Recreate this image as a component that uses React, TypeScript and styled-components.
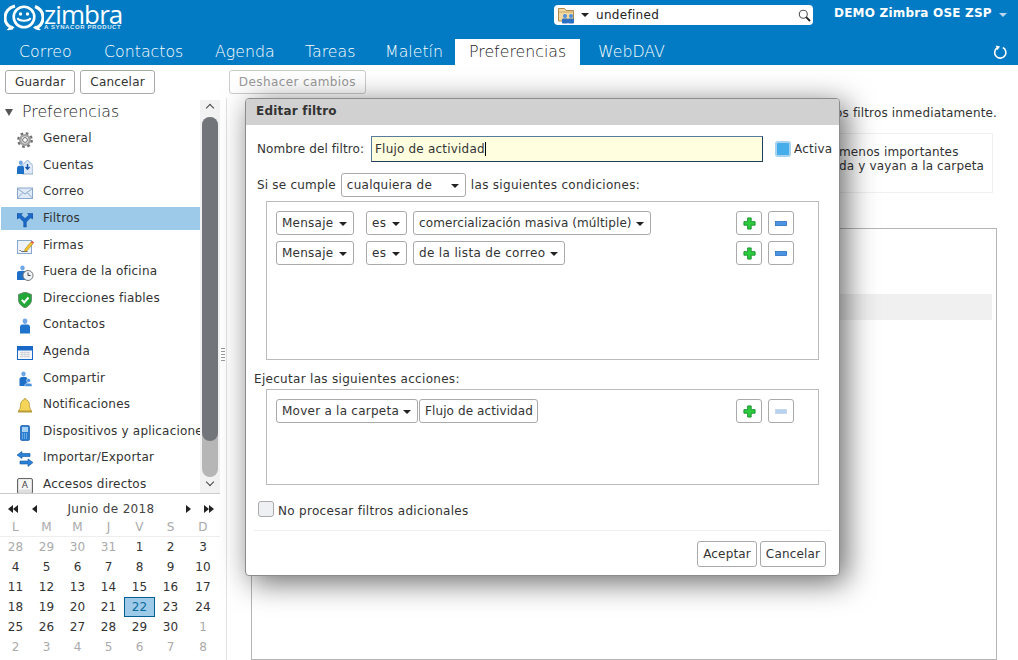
import React from "react";
import styled, { createGlobalStyle } from "styled-components";

const GlobalStyle = createGlobalStyle`
  html, body {
    margin: 0;
    padding: 0;
    background: #fff;
    font-family: "DejaVu Sans", sans-serif;
    font-size: 12px;
    color: #333;
  }
  * { box-sizing: border-box; }
`;

const Gear = () => (
  <svg width="16" height="16" viewBox="0 0 16 16">
    <circle cx="8" cy="8" r="6.500" fill="none" stroke="#6f6f6f" strokeWidth="2.800" strokeDasharray="2.550 2.550" />
    <circle cx="8" cy="8" r="4.700" fill="none" stroke="#a2a2a2" strokeWidth="2.600" />
    <circle cx="8" cy="8" r="2.400" fill="#fff" stroke="#555" strokeWidth=".9" />
  </svg>
);

const Accounts = () => (
  <svg width="16" height="16" viewBox="0 0 16 16">
    <path d="M5 6.500 10.500 1 16 6.500V15H5z" fill="#dce8f5" stroke="#7d9dc4" strokeWidth=".8" />
    <path d="M10.500 5v5M8.500 8l2 2.300 2-2.300" fill="none" stroke="#1656a8" strokeWidth="1.400" />
    <path d="M3.800 1.500c1.300 0 2 1 2 2.200S5.100 6 3.800 6 1.800 4.900 1.800 3.700 2.500 1.500 3.800 1.500z" fill="#6fa6e4" />
    <path d="M0 15v-6c0-1.300 1-2.300 2-2.300h3.500c1 0 1.500 1 1.500 2.300v6z" fill="#1e6fc8" />
  </svg>
);

const Envelope = () => (
  <svg width="16" height="16" viewBox="0 0 16 16">
    <rect x=".5" y="3" width="15" height="10.500" fill="#dfeaf6" stroke="#8aa7cc" />
    <path d="M.5 3.500 8 9l7.500-5.500M.5 13l5.200-5.200M15.500 13l-5.200-5.200" fill="none" stroke="#8aa7cc" />
  </svg>
);

const FilterIcon = () => (
  <svg width="16" height="16" viewBox="0 0 16 16">
    <path d="M6.700 15V10L2.500 5.800 0 7V1.500h5.500L4 3 8 6.500 12 3l-1.500-1.500H16V7l-2.500-1.200L9.300 10v5z" fill="#1a68c8" stroke="#0f4a98" strokeWidth=".5" />
  </svg>
);

const Signature = () => (
  <svg width="17" height="16" viewBox="0 0 17 16">
    <rect x=".5" y="2.500" width="14" height="13" fill="#eef3fa" stroke="#8aa7cc" />
    <path d="M2.500 12.500h1l1 1h6" fill="none" stroke="#444" strokeWidth=".8" />
    <path d="M8 11 14 4l2 1.800-6 7-2.500.8z" fill="#f2c230" stroke="#9a7a10" strokeWidth=".5" />
    <path d="M14 4l1-1.200 2 1.800-1 1.200z" fill="#e24a4a" />
  </svg>
);

const OutOfOffice = () => (
  <svg width="17" height="16" viewBox="0 0 17 16">
    <path d="M5.500 0.500c1.400 0 2.200 1 2.200 2.300S6.900 5.500 5.500 5.500 3.300 4.100 3.300 2.800 4.100 0.500 5.500 0.500z" fill="#6fa6e4" />
    <path d="M0 15V8c0-1.300 1-2 2-2h7c1 0 2 .7 2 2v7z" fill="#1e6fc8" />
    <circle cx="11" cy="10.500" r="5" fill="#eef2f6" stroke="#777" />
    <path d="M11 7.500v3h2.500" fill="none" stroke="#444" />
  </svg>
);

const Shield = () => (
  <svg width="16" height="16" viewBox="0 0 16 16">
    <path d="M8 0 14.500 2.500V8c0 3.500-3 6.200-6.500 8C4.500 14.200 1.500 11.500 1.500 8V2.500z" fill="#22a838" stroke="#5f7f6a" strokeWidth=".8" />
    <path d="M4.800 7.800 7.200 10.500 11.500 5.500" fill="none" stroke="#fff" strokeWidth="2" />
  </svg>
);

const Contact = () => (
  <svg width="16" height="16" viewBox="0 0 16 16">
    <path d="M8 .5c1.500 0 2.400 1.100 2.400 2.500S9.500 6 8 6 5.600 4.400 5.600 3 6.500.5 8 .5z" fill="#6fa6e4" />
    <path d="M3 15.500V9c0-1.500 1-2.500 2.300-2.500h5.400C12 6.500 13 7.500 13 9v6.500z" fill="#1e74cc" />
  </svg>
);

const CalendarIcon = () => (
  <svg width="16" height="16" viewBox="0 0 16 16">
    <rect x=".5" y="1.500" width="15" height="13" fill="#f4f6f8" stroke="#1a68c8" />
    <rect x="1" y="2" width="14" height="3.500" fill="#1a68c8" />
    <path d="M3 7.500h10M3 9.500h10M3 11.500h10M5 6.500v6M8 6.500v6M11 6.500v6" stroke="#c8ccd2" strokeWidth=".7" />
  </svg>
);

const Share = () => (
  <svg width="16" height="16" viewBox="0 0 16 16">
    <path d="M6.500 .5c1.300 0 2.200 1 2.200 2.300S7.800 5.500 6.500 5.500 4.300 4.100 4.300 2.800 5.200.5 6.500.5z" fill="#6fa6e4" />
    <path d="M2.500 15V8.500C2.500 7 3.500 6 4.800 6h3.500C9.600 6 10.500 7 10.500 8.500V15z" fill="#1e6fc8" />
    <circle cx="11.500" cy="9.500" r="2" fill="#4a92de" stroke="#fff" strokeWidth=".5" />
    <path d="M8 15.500V14c0-1 1-1.800 2-1.800h3c1 0 2 .8 2 1.800v1.500z" fill="#4a92de" stroke="#fff" strokeWidth=".5" />
  </svg>
);

const Bell = () => (
  <svg width="16" height="16" viewBox="0 0 16 16">
    <path d="M8 .5c.8 0 1.200.6 1.200 1.300C11.500 2.500 12.500 4.500 12.500 7.500c0 2.500 1 4 2 5.500h-13c1-1.500 2-3 2-5.500 0-3 1-5 3.300-5.700C6.800 1.100 7.200.5 8 .5z" fill="#f5d45a" stroke="#a8892a" strokeWidth=".7" />
    <rect x="1" y="13" width="14" height="1.500" fill="#b89a38" />
  </svg>
);

const Phone = () => (
  <svg width="16" height="16" viewBox="0 0 16 16">
    <rect x="3.500" y=".5" width="9" height="15" rx="1.500" fill="#2a7ed2" stroke="#1a5aa8" strokeWidth=".7" />
    <rect x="5" y="2" width="6" height="5" fill="#a8d4f2" />
    <path d="M5 9h6M5 11h6M5 13h6" stroke="#a8d4f2" strokeDasharray="1 1" />
  </svg>
);

const ImportExport = () => (
  <svg width="16" height="16" viewBox="0 0 16 16">
    <path d="M0 4 5 .5V2.500h8v3H5V7.500z" fill="#2a82d8" stroke="#11509c" strokeWidth=".6" />
    <path d="M16 11.500 11 8v2H3v3h8v2.500z" fill="#2a82d8" stroke="#11509c" strokeWidth=".6" />
  </svg>
);

const Shortcut = () => (
  <svg width="16" height="16" viewBox="0 0 16 16">
    <rect x=".5" y=".5" width="15" height="15" rx="1.500" fill="#dedede" stroke="#666" />
    <rect x="2" y="1.500" width="12" height="10" fill="#f6f6f6" />
    <text x="8" y="10" fontSize="9" textAnchor="middle" fill="#444" fontFamily="DejaVu Sans">A</text>
  </svg>
);

const Logo = () => (
  <svg width="40" height="28" viewBox="0 0 40 28">
    <path d="M9 24.500C3 22 1 18 1 14 1 8 5 3.500 11 2" fill="none" stroke="#fff" strokeWidth="3" />
    <path d="M31 2.500c5 2 8 6 8 11 0 4.500-2.500 8.500-7 10.500" fill="none" stroke="#fff" strokeWidth="3" />
    <circle cx="20" cy="13" r="10.300" fill="none" stroke="#fff" strokeWidth="2.600" />
    <path d="M2.500 26c3 .5 6-.5 8-2.500l-3-2zM37 26c-3 .5-6-.5-8-2.500l3-2z" fill="#fff" />
    <circle cx="16.500" cy="10" r="1.700" fill="#fff" />
    <circle cx="23.500" cy="10" r="1.700" fill="#fff" />
    <path d="M13.500 14c1.500 3.500 11.500 3.500 13 0" fill="none" stroke="#fff" strokeWidth="2" />
  </svg>
);

const FolderPeople = () => (
  <svg width="18" height="18" viewBox="0 0 18 18">
    <path d="M.5 15V2.500h6l1.500 2h7.500V15z" fill="#f3d9a0" stroke="#b08a4c" />
    <path d="M1 6h14" stroke="#b08a4c" strokeWidth=".6" />
    <circle cx="7" cy="10" r="2" fill="#4f8fdc" />
    <circle cx="13" cy="10" r="2" fill="#4f8fdc" />
    <rect x="4" y="12.500" width="6" height="5" rx="1" fill="#2a6fc4" />
    <rect x="10" y="12.500" width="6" height="5" rx="1" fill="#2a6fc4" />
  </svg>
);

const Magnifier = () => (
  <svg width="13" height="13" viewBox="0 0 13 13">
    <circle cx="5.300" cy="5.300" r="4" fill="#fff" stroke="#555" strokeWidth="1.100" />
    <path d="M8.200 8.200 12 12" stroke="#222" strokeWidth="1.800" />
  </svg>
);

const Refresh = () => (
  <svg width="15" height="15" viewBox="0 0 16 16">
    <path d="M10.500 2.700A6 6 0 1 1 4.200 3.200" fill="none" stroke="#fff" strokeWidth="1.700" />
    <path d="M3 0.500 7.500 1.500 4.500 5.500z" fill="#fff" />
  </svg>
);

const PlusIcon = () => (
  <svg width="13" height="13" viewBox="0 0 14 14">
    <path d="M5 1h3.800v4H13v3.800H8.800V13H5V8.800H1V5h4z" fill="#2ecb3f" stroke="#13902a" strokeWidth="1" strokeLinejoin="round" />
  </svg>
);

const MinusIcon: React.FC<{ off?: boolean }> = ({ off }) => (
  <svg width="12" height="5" viewBox="0 0 12 5">
    <rect x=".4" y=".4" width="11.200" height="4.200" fill={off ? "#b6d2f0" : "#4c94e2"} stroke={off ? "#c4d4e8" : "#2f74c0"} strokeWidth=".8" />
  </svg>
);

const navItems: [string, React.ReactNode][] = [
  ["General", <Gear />],
  ["Cuentas", <Accounts />],
  ["Correo", <Envelope />],
  ["Filtros", <FilterIcon />],
  ["Firmas", <Signature />],
  ["Fuera de la oficina", <OutOfOffice />],
  ["Direcciones fiables", <Shield />],
  ["Contactos", <Contact />],
  ["Agenda", <CalendarIcon />],
  ["Compartir", <Share />],
  ["Notificaciones", <Bell />],
  ["Dispositivos y aplicaciones", <Phone />],
  ["Importar/Exportar", <ImportExport />],
  ["Accesos directos", <Shortcut />],
];

const tabs: { label: string; width: number; pad: number; active?: boolean }[] = [
  { label: "Correo", width: 85, pad: 15.5 },
  { label: "Contactos", width: 111, pad: 15.5 },
  { label: "Agenda", width: 90, pad: 15.5 },
  { label: "Tareas", width: 80, pad: 15.5 },
  { label: "Maletín", width: 85.5, pad: 15.5 },
  { label: "Preferencias", width: 125, pad: 14, active: true },
  { label: "WebDAV", width: 90, pad: 18 },
];

const weeks = [
  ["28", "29", "30", "31", "1", "2", "3"],
  ["4", "5", "6", "7", "8", "9", "10"],
  ["11", "12", "13", "14", "15", "16", "17"],
  ["18", "19", "20", "21", "22", "23", "24"],
  ["25", "26", "27", "28", "29", "30", "1"],
  ["2", "3", "4", "5", "6", "7", "8"],
];

const isOtherMonth = (week: number, day: number) =>
  (week === 0 && day < 4) || (week === 4 && day === 6) || week === 5;

const App: React.FC = () => {
  return (
    <Page>
      <GlobalStyle />
      <Header>
        <TopBar>
          <LogoWrap>
            <Logo />
            <LogoText>
              <LogoName>zimbra</LogoName>
              <LogoSub>A SYNACOR PRODUCT</LogoSub>
            </LogoText>
          </LogoWrap>
          <SearchBox>
            <FolderPeople />
            <SearchCaret />
            <SearchText>undefined</SearchText>
            <Magnifier />
          </SearchBox>
          <UserName>DEMO Zimbra OSE ZSP</UserName>
          <UserCaret />
        </TopBar>
        <TabBar>
          {tabs.map((t) => (
            <Tab key={t.label} $active={t.active} $width={t.width} $pad={t.pad}>
              {t.label}
            </Tab>
          ))}
          <RefreshWrap>
            <Refresh />
          </RefreshWrap>
        </TabBar>
      </Header>

      <Toolbar>
        <ToolButton>Guardar</ToolButton>
        <ToolButton>Cancelar</ToolButton>
        <ToolButton $disabled $wide>
          Deshacer cambios
        </ToolButton>
      </Toolbar>

      <Body>
        <Sidebar>
          <TreeArea>
            <Tree>
              <TreeHead>
                <TreeArrow />
                Preferencias
              </TreeHead>
              {navItems.map(([label, icon]) => (
                <TreeItem key={label} $selected={label === "Filtros"}>
                  <TreeIcon>{icon}</TreeIcon>
                  <TreeLabel>{label}</TreeLabel>
                </TreeItem>
              ))}
            </Tree>
            <ScrollBar>
              <ScrollUp />
              <ScrollTrack>
                <ScrollThumb />
              </ScrollTrack>
              <ScrollDown />
            </ScrollBar>
          </TreeArea>
          <Calendar>
            <CalHead>
              <CalNav>
                <NavArrow $left />
                <NavArrow $left />
              </CalNav>
              <CalNavSingle>
                <NavArrow $left />
              </CalNavSingle>
              <CalTitle>Junio de 2018</CalTitle>
              <CalNavSingle>
                <NavArrow />
              </CalNavSingle>
              <CalNav>
                <NavArrow />
                <NavArrow />
              </CalNav>
            </CalHead>
            <CalWeekdays>
              {["L", "M", "M", "J", "V", "S", "D"].map((d, i) => (
                <span key={i}>{d}</span>
              ))}
            </CalWeekdays>
            <CalGrid>
              {weeks.map((w, wi) =>
                w.map((d, di) => (
                  <CalDay key={`${wi}-${di}`} $other={isOtherMonth(wi, di)} $selected={wi === 3 && di === 4}>
                    {d}
                  </CalDay>
                ))
              )}
            </CalGrid>
          </Calendar>
        </Sidebar>

        <Sash>
          <Grip />
        </Sash>

        <Main>
          <Notice>Los cambios se aplican a estos filtros inmediatamente.</Notice>
          <InfoBox>
            <InfoText>
              menos importantes
              <br />
              da y vayan a la carpeta
            </InfoText>
          </InfoBox>
          <ListPanel>
            <ListRow />
          </ListPanel>
        </Main>
      </Body>

      <Dialog>
        <DialogTitle>Editar filtro</DialogTitle>
        <DialogBody>
          <NameRow>
            <NameLabel>Nombre del filtro:</NameLabel>
            <NameInput>
              Flujo de actividad
              <Cursor />
            </NameInput>
            <ActiveCheck />
            <span>Activa</span>
          </NameRow>
          <MatchRow>
            <MatchLabel>Si se cumple</MatchLabel>
            <Select $width={125}>
              cualquiera de
              <Caret />
            </Select>
            <span>las siguientes condiciones:</span>
          </MatchRow>
          <RuleBox $height={159}>
            <RuleRow>
              <Select $width={78}>
                Mensaje
                <Caret />
              </Select>
              <Select $width={41} $gap={12}>
                es
                <Caret />
              </Select>
              <Select $width={238} $gap={6} $track={0.1}>
                comercialización masiva (múltiple)
                <Caret />
              </Select>
              <RuleActions />
            </RuleRow>
            <RuleRow>
              <Select $width={78}>
                Mensaje
                <Caret />
              </Select>
              <Select $width={41} $gap={12}>
                es
                <Caret />
              </Select>
              <Select $width={152} $gap={6} $track={0.35}>
                de la lista de correo
                <Caret />
              </Select>
              <RuleActions />
            </RuleRow>
          </RuleBox>
          <ActionsLabel>Ejecutar las siguientes acciones:</ActionsLabel>
          <RuleBox $height={96}>
            <RuleRow>
              <Select $width={142}>
                Mover a la carpeta
                <Caret />
              </Select>
              <Select $width={119} $gap={1} $track={0.1}>
                Flujo de actividad
              </Select>
              <RuleActions off />
            </RuleRow>
          </RuleBox>
          <StopRow>
            <StopCheck />
            <StopLabel>No procesar filtros adicionales</StopLabel>
          </StopRow>
          <DialogFooter>
            <FooterButton>Aceptar</FooterButton>
            <FooterButton>Cancelar</FooterButton>
          </DialogFooter>
        </DialogBody>
      </Dialog>
    </Page>
  );
};

const RuleActions: React.FC<{ off?: boolean }> = ({ off }) => (
  <Actions>
    <IconButton>
      <PlusIcon />
    </IconButton>
    <IconButton>
      <MinusIcon off={off} />
    </IconButton>
  </Actions>
);

const Page = styled.div`
  position: relative;
  width: 1018px;
  height: 660px;
  overflow: hidden;
  display: flex;
  flex-direction: column;
  background: #fff;
  letter-spacing: 0.2px;
`;

const Header = styled.header`
  height: 65px;
  background: #027bc4;
  color: #fff;
  letter-spacing: 0;
`;

const TopBar = styled.div`
  height: 39px;
  display: flex;
  align-items: flex-start;
`;

const LogoWrap = styled.div`
  width: 554px;
  padding: 4px 0 0 4px;
  display: flex;
`;

const LogoText = styled.div`
  display: flex;
  flex-direction: column;
  width: 80px;
`;

const LogoName = styled.div`
  font-family: "Open Sans", sans-serif;
  font-size: 26px;
  line-height: 20px;
  height: 20px;
  letter-spacing: -0.9px;
`;

const LogoSub = styled.div`
  font-family: "Liberation Sans", sans-serif;
  font-weight: 700;
  font-size: 6px;
  line-height: 7px;
  letter-spacing: 0.6px;
  white-space: nowrap;
  opacity: 0.85;
`;

const SearchBox = styled.div`
  margin-top: 5px;
  width: 259px;
  height: 20px;
  background: #fff;
  border-radius: 4px;
  display: flex;
  align-items: center;
  padding: 0 2px 0 4px;
  color: #222;
`;

const SearchCaret = styled.span`
  margin-left: 5px;
  border-top: 4px solid #222;
  border-left: 4px solid transparent;
  border-right: 4px solid transparent;
`;

const SearchText = styled.span`
  margin-left: 7px;
  flex: 1;
  font-size: 12px;
  letter-spacing: 0.3px;
`;

const UserName = styled.div`
  margin: 6px 0 0 21px;
  font-weight: 700;
  font-size: 12px;
  line-height: 15px;
  white-space: nowrap;
  letter-spacing: 0.2px;
`;

const UserCaret = styled.span`
  margin: 13px 0 0 7px;
  border-top: 4px solid #b9d8ee;
  border-left: 4px solid transparent;
  border-right: 4px solid transparent;
`;

const TabBar = styled.nav`
  height: 26px;
  display: flex;
  padding-left: 3.500px;
`;

const Tab = styled.div<{ $active?: boolean; $width: number; $pad: number }>`
  flex: none;
  width: ${(props) => props.$width}px;
  padding-left: ${(props) => props.$pad}px;
  white-space: nowrap;
  font-size: 15.800px;
  font-weight: 200;
  line-height: 26px;
  color: ${(props) => (props.$active ? "#222" : "#fff")};
  background: ${(props) => (props.$active ? "#fff" : "transparent")};
`;

const RefreshWrap = styled.div`
  margin-left: auto;
  padding: 6px 10px 0 0;
`;

const Toolbar = styled.div`
  height: 33px;
  padding: 5px 0 0 5px;
  display: flex;
  gap: 5px;
  align-items: flex-start;
`;

const ToolButton = styled.div<{ $disabled?: boolean; $wide?: boolean }>`
  height: 24px;
  padding: 0 9px;
  border: 1px solid ${(props) => (props.$disabled ? "#ccc" : "#aaa")};
  border-radius: 3px;
  line-height: 23px;
  color: ${(props) => (props.$disabled ? "#999" : "#333")};
  margin-left: ${(props) => (props.$wide ? "69px" : "0")};
  letter-spacing: ${(props) => (props.$disabled ? "0.4px" : "0.2px")};
`;

const Body = styled.div`
  flex: 1;
  display: flex;
  min-height: 0;
`;

const Sidebar = styled.aside`
  width: 220px;
  display: flex;
  flex-direction: column;
`;

const TreeArea = styled.div`
  height: 396px;
  display: flex;
  border-bottom: 1px solid #ccc;
`;

const Tree = styled.div`
  width: 200px;
  overflow: hidden;
  padding-left: 1px;
`;

const TreeHead = styled.div`
  height: 29.200px;
  padding: 0 0 2px 4px;
  display: flex;
  align-items: center;
  font-size: 15.800px;
  font-weight: 200;
  color: #222;
  letter-spacing: 0;
  gap: 9px;
`;

const TreeArrow = styled.span`
  border-top: 7px solid #555;
  border-left: 4px solid transparent;
  border-right: 4px solid transparent;
  margin-top: 2px;
`;

const TreeItem = styled.div<{ $selected?: boolean }>`
  height: 23px;
  margin-bottom: 3.600px;
  display: flex;
  align-items: center;
  background: ${(props) => (props.$selected ? "#9ccae8" : "transparent")};
  white-space: nowrap;
  font-size: 12px;
`;

const TreeIcon = styled.span`
  flex: none;
  width: 42px;
  padding: 2.600px 0 0 16px;
  display: flex;
  align-items: center;
`;

const TreeLabel = styled.span`
  margin-top: -1px;
`;

const ScrollBar = styled.div`
  width: 20px;
  background: #f2f2f2;
  display: flex;
  flex-direction: column;
  align-items: center;
  margin-top: 2px;
`;

const ScrollUp = styled.span`
  margin: 5px 0 5px;
  width: 6px;
  height: 6px;
  border-left: 1.500px solid #444;
  border-top: 1.500px solid #444;
  transform: rotate(45deg);
`;

const ScrollTrack = styled.div`
  width: 16px;
  height: 360px;
  margin-top: 1px;
  background: #b6b6b6;
  border-radius: 8px;
`;

const ScrollThumb = styled.div`
  height: 324px;
  background: #72757a;
  border-radius: 8px;
`;

const ScrollDown = styled.span`
  margin-top: 2px;
  width: 6px;
  height: 6px;
  border-right: 1.500px solid #444;
  border-bottom: 1.500px solid #444;
  transform: rotate(45deg);
`;

const Calendar = styled.div`
  flex: 1;
  padding-top: 5px;
  letter-spacing: 0.1px;
`;

const CalHead = styled.div`
  height: 20px;
  display: flex;
  align-items: center;
  padding: 0 4px 0 6px;
`;

const CalNav = styled.span`
  width: 14px;
  display: flex;
  justify-content: center;
`;

const CalNavSingle = styled(CalNav)`
  margin: 0 7px;
`;

const NavArrow = styled.span<{ $left?: boolean }>`
  border-top: 4px solid transparent;
  border-bottom: 4px solid transparent;
  ${(props) => (props.$left ? "border-right: 5px solid #222;" : "border-left: 5px solid #222;")}
`;

const CalTitle = styled.span`
  flex: 1;
  text-align: center;
  color: #444;
  font-size: 12px;
  letter-spacing: 0.35px;
`;

const CalWeekdays = styled.div`
  height: 18px;
  display: grid;
  grid-template-columns: repeat(6, 31px) 34px;
  text-align: center;
  align-items: center;
  color: #aaa;
  border-bottom: 1px solid #eee;
  padding-bottom: 2px;
`;

const CalGrid = styled.div`
  display: grid;
  grid-template-columns: repeat(6, 31px) 34px;
  grid-auto-rows: 20px;
`;

const CalDay = styled.div<{ $other?: boolean; $selected?: boolean }>`
  display: flex;
  align-items: center;
  justify-content: center;
  color: ${(props) => (props.$selected ? "#0b6a9e" : props.$other ? "#aaa" : "#333")};
  background: ${(props) => (props.$selected ? "#9ccae8" : "transparent")};
  border: ${(props) => (props.$selected ? "1px solid #005f92" : "none")};
`;

const Sash = styled.div`
  width: 7px;
  border-right: 1px solid #e2e2e2;
  display: flex;
  align-items: center;
  justify-content: center;
  padding-bottom: 50px;
`;

const Grip = styled.div`
  width: 4px;
  height: 13px;
  background: repeating-linear-gradient(#999 0 1px, transparent 1px 3px);
`;

const Main = styled.main`
  flex: 1;
  padding: 0 21px 0 24px;
  display: flex;
  flex-direction: column;
  min-width: 0;
`;

const Notice = styled.div`
  height: 35px;
  line-height: 31px;
  text-align: right;
  white-space: nowrap;
  font-size: 12px;
  letter-spacing: 0.15px;
`;

const InfoBox = styled.div`
  height: 60px;
  margin-right: 4px;
  border: 1px solid #f0f0f0;
  padding: 11px 0 0 587px;
  white-space: nowrap;
  letter-spacing: 0.15px;
`;

const InfoText = styled.div`
  line-height: 14px;
`;

const ListPanel = styled.div`
  flex: 1;
  margin-top: 35px;
  border: 1px solid #b5b5b5;
  padding: 65px 4px 0 0;
`;

const ListRow = styled.div`
  height: 26px;
  background: #f0f0f0;
`;

const Dialog = styled.section`
  position: absolute;
  left: 245px;
  top: 98px;
  width: 595px;
  height: 478px;
  background: #fff;
  border: 1px solid #8c8c8c;
  border-radius: 4px;
  box-shadow: 6px 6px 30px rgba(0, 0, 0, 0.6);
  overflow: visible;
`;

const DialogTitle = styled.div`
  height: 26px;
  background: #d1d1d1;
  border-radius: 3px 3px 0 0;
  padding-left: 10px;
  font-weight: 700;
  font-size: 12px;
  line-height: 25px;
`;

const DialogBody = styled.div`
  padding: 11px 8px 0;
`;

const NameRow = styled.div`
  height: 26px;
  display: flex;
  align-items: center;
  padding-left: 3px;
`;

const NameLabel = styled.span`
  flex: none;
  width: 114px;
  letter-spacing: 0.1px;
`;

const NameInput = styled.div`
  flex: none;
  width: 392px;
  height: 26px;
  background: #ffffe0;
  border: 1px solid #1f3d5c;
  border-left-color: #5a7a9c;
  border-top-color: #5a7a9c;
  padding-left: 3px;
  line-height: 24px;
  display: flex;
  align-items: center;
`;

const Cursor = styled.span`
  width: 1px;
  height: 14px;
  background: #000;
`;

const ActiveCheck = styled.span`
  flex: none;
  width: 16px;
  height: 16px;
  margin: 0 3px 0 12px;
  background: #45aeea;
  border: 2px solid #a8d2ee;
  border-radius: 3px;
`;

const MatchRow = styled.div`
  display: flex;
  align-items: center;
  gap: 5px;
  height: 24px;
  margin-top: 11px;
  padding-left: 3px;
  letter-spacing: 0.3px;
`;

const MatchLabel = styled.span`
  letter-spacing: 0.2px;
`;

const Select = styled.div<{ $width: number; $gap?: number; $track?: number }>`
  width: ${(props) => props.$width}px;
  margin-left: ${(props) => props.$gap ?? 0}px;
  height: 24px;
  flex: none;
  border: 1px solid #aaa;
  border-radius: 3px;
  padding: 0 6px 0 5px;
  line-height: 22px;
  display: flex;
  align-items: center;
  justify-content: space-between;
  white-space: nowrap;
  background: #fff;
  letter-spacing: ${(props) => props.$track ?? 0.25}px;
`;

const Caret = styled.span`
  border-top: 4px solid #222;
  border-left: 4px solid transparent;
  border-right: 4px solid transparent;
  margin-top: 1px;
`;

const RuleBox = styled.div<{ $height: number }>`
  height: ${(props) => props.$height}px;
  margin: 4px 0 0 12px;
  width: 553px;
  border: 1px solid #bbb;
  padding: 9px 24px 0 9px;
  display: flex;
  flex-direction: column;
  gap: 6px;
`;

const RuleRow = styled.div`
  display: flex;
  align-items: center;
`;

const Actions = styled.div`
  margin-left: auto;
  display: flex;
  gap: 6px;
`;

const IconButton = styled.div`
  width: 26px;
  height: 24px;
  border: 1px solid #aaa;
  border-radius: 3px;
  display: flex;
  align-items: center;
  justify-content: center;
`;

const ActionsLabel = styled.div`
  margin-top: 12px;
  height: 13px;
  line-height: 15px;
  letter-spacing: 0.3px;
`;

const StopRow = styled.div`
  display: flex;
  align-items: center;
  gap: 4px;
  margin-top: 15px;
  padding-left: 4px;
  height: 18px;
`;

const StopCheck = styled.span`
  width: 16px;
  height: 16px;
  background: #eff0f3;
  border: 1px solid #aaa;
  border-radius: 3px;
`;

const StopLabel = styled.span`
  margin-top: 4px;
  letter-spacing: 0.3px;
`;

const DialogFooter = styled.div`
  margin-top: 12px;
  border-top: 1px solid #eee;
  padding: 10px 5px 0 0;
  width: 577px;
  display: flex;
  justify-content: flex-end;
  gap: 3px;
`;

const FooterButton = styled.div`
  height: 26px;
  padding: 0 5px;
  border: 1px solid #aaa;
  border-radius: 3px;
  line-height: 24px;
  letter-spacing: 0.15px;
`;

export default App;
